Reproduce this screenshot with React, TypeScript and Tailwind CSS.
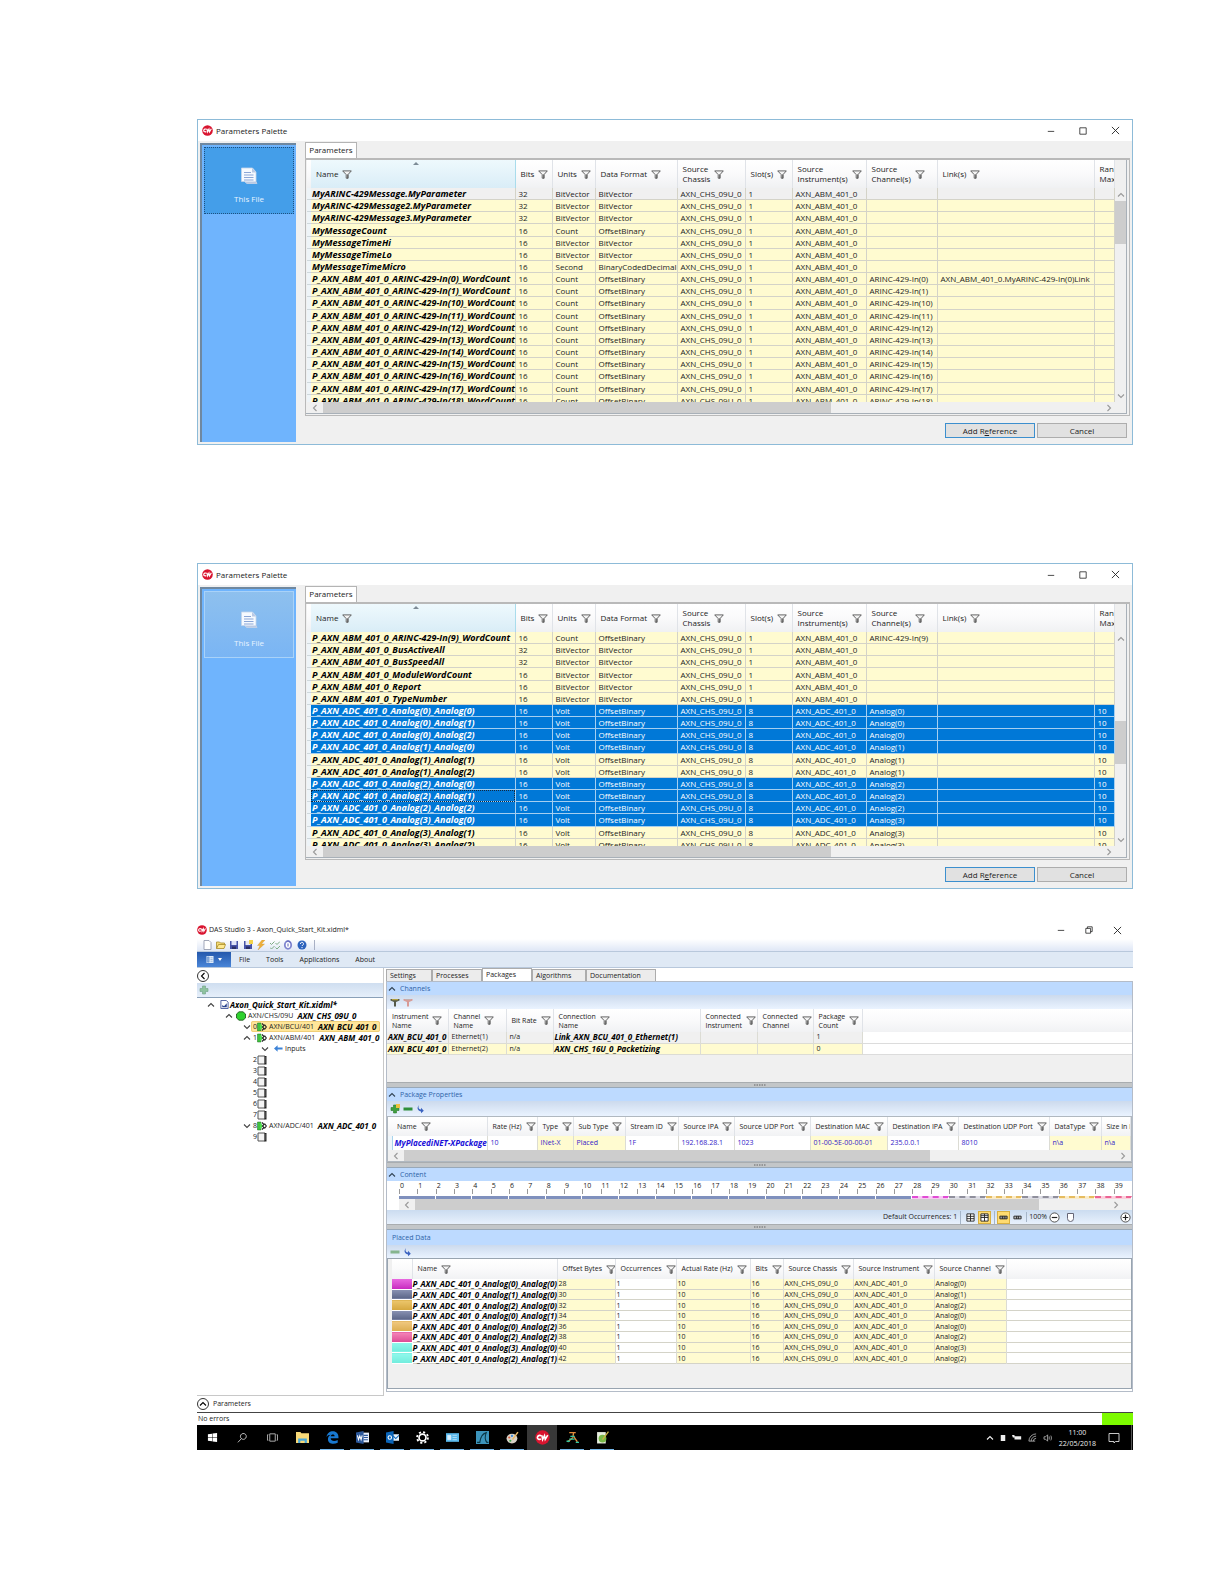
import type { ReactNode } from "react";
import { clsx } from "clsx";

type Column = { label: string; w: string; filter?: boolean; sorted?: boolean };

const paletteColumns: Column[] = [
  { label: "Name", w: "w-[204px]", sorted: true },
  { label: "Bits", w: "w-[37px]" },
  { label: "Units", w: "w-[43px]" },
  { label: "Data Format", w: "w-[82px]" },
  { label: "Source\nChassis", w: "w-[68px]" },
  { label: "Slot(s)", w: "w-[47px]" },
  { label: "Source\nInstrument(s)", w: "w-[74px]" },
  { label: "Source\nChannel(s)", w: "w-[71px]" },
  { label: "Link(s)", w: "w-[157px]" },
  { label: "Ran\nMax", w: "w-auto", filter: false },
];

type ParamRow = { cells: string[]; selected?: boolean; current?: boolean; focused?: boolean };

const abm = (name: string, bits: string, units: string, format: string, channel = "", link = ""): ParamRow => ({
  cells: [name, bits, units, format, "AXN_CHS_09U_0", "1", "AXN_ABM_401_0", channel, link, ""],
});

const adc = (a: number, b: number, selected = false, focused = false): ParamRow => ({
  cells: [
    `P_AXN_ADC_401_0_Analog(${a})_Analog(${b})`,
    "16",
    "Volt",
    "OffsetBinary",
    "AXN_CHS_09U_0",
    "8",
    "AXN_ADC_401_0",
    `Analog(${a})`,
    "",
    "10",
  ],
  selected,
  focused,
});

const wordCount = (n: number, link = "") =>
  abm(`P_AXN_ABM_401_0_ARINC-429-In(${n})_WordCount`, "16", "Count", "OffsetBinary", `ARINC-429-In(${n})`, link);

const firstRows: ParamRow[] = [
  { ...abm("MyARINC-429Message.MyParameter", "32", "BitVector", "BitVector"), current: true },
  abm("MyARINC-429Message2.MyParameter", "32", "BitVector", "BitVector"),
  abm("MyARINC-429Message3.MyParameter", "32", "BitVector", "BitVector"),
  abm("MyMessageCount", "16", "Count", "OffsetBinary"),
  abm("MyMessageTimeHi", "16", "BitVector", "BitVector"),
  abm("MyMessageTimeLo", "16", "BitVector", "BitVector"),
  abm("MyMessageTimeMicro", "16", "Second", "BinaryCodedDecimal"),
  wordCount(0, "AXN_ABM_401_0.MyARINC-429-In(0)Link"),
  wordCount(1),
  ...[10, 11, 12, 13, 14, 15, 16, 17, 18].map((n) => wordCount(n)),
];

const secondRows: ParamRow[] = [
  wordCount(9),
  abm("P_AXN_ABM_401_0_BusActiveAll", "32", "BitVector", "BitVector"),
  abm("P_AXN_ABM_401_0_BusSpeedAll", "32", "BitVector", "BitVector"),
  abm("P_AXN_ABM_401_0_ModuleWordCount", "16", "BitVector", "BitVector"),
  abm("P_AXN_ABM_401_0_Report", "16", "BitVector", "BitVector"),
  abm("P_AXN_ABM_401_0_TypeNumber", "16", "BitVector", "BitVector"),
  adc(0, 0, true),
  adc(0, 1, true),
  adc(0, 2, true),
  adc(1, 0, true),
  adc(1, 1),
  adc(1, 2),
  adc(2, 0, true),
  adc(2, 1, true, true),
  adc(2, 2, true),
  adc(3, 0, true),
  adc(3, 1),
  adc(3, 2),
];

function CwLogo({ className }: { className?: string }) {
  return (
    <svg viewBox="0 0 24 24" className={className} aria-hidden="true">
      <circle cx="12" cy="12" r="11.5" fill="#d9142f" />
      <path
        d="M10 9.500C7.500 7.800 4 9 3.800 12c-.1 2.800 3.400 4 5.700 2.200M11 8.500l1.200 6.500 3-6 1.200 6 4-6.800"
        fill="none"
        stroke="#fff"
        strokeWidth="2.600"
      />
    </svg>
  );
}

function Funnel() {
  return (
    <svg viewBox="0 0 10 9" className="h-[9px] w-[10px] shrink-0" aria-hidden="true">
      <path d="M.7.9h8.600L6 4.600v3.600H4.200V4.600z" fill="#f4f4f4" stroke="#555" strokeWidth=".9" />
      <path d="M5.300 4.400h1v4h-1z" fill="#555" />
    </svg>
  );
}

function Chevron({ dir, className }: { dir: "up" | "down" | "left" | "right"; className?: string }) {
  const d = {
    up: "M1 5.500 4 2.500l3 3",
    down: "M1 2.500l3 3 3-3",
    left: "M5.500 1l-3 3 3 3",
    right: "M2.500 1l3 3-3 3",
  }[dir];
  return (
    <svg viewBox="0 0 8 8" className={clsx("h-2 w-2 shrink-0", className)} aria-hidden="true">
      <path d={d} fill="none" stroke="currentColor" strokeWidth="1.100" />
    </svg>
  );
}

function HeadCell({ col, className }: { col: Column; className?: string }) {
  return (
    <th className={clsx("relative border-r border-[#e0e3e8] p-0 font-normal", col.w, className)}>
      {col.sorted && (
        <svg viewBox="0 0 6 3" className="absolute top-0.5 left-1/2 h-[3px] w-[6px]" aria-hidden="true">
          <path d="M0 3l3-3 3 3z" fill="#7d8b96" />
        </svg>
      )}
      <span className="flex items-center gap-1 overflow-hidden pl-[5px] text-left whitespace-pre">
        {col.label}
        {col.filter !== false && <Funnel />}
      </span>
    </th>
  );
}

function WindowControls({ restored, wide }: { restored?: boolean; wide?: boolean }) {
  const size = clsx("flex h-5 items-center justify-center text-[#222]", wide ? "w-8" : "w-7");
  return (
    <div className={clsx("ml-auto flex", wide ? "pr-px" : "pr-0.5")}>
      <button type="button" aria-label="Minimize" className={size}>
        <svg viewBox="0 0 10 10" className="h-2 w-2">
          <path d="M1 5.500h8" stroke="currentColor" />
        </svg>
      </button>
      <button type="button" aria-label="Maximize" className={size}>
        <svg viewBox="0 0 10 10" className="h-2 w-2" fill="none" stroke="currentColor">
          {restored ? <path d="M1 3h6v6H1zM3 3V1h6v6H7" /> : <path d="M1 1h8v8H1z" />}
        </svg>
      </button>
      <button type="button" aria-label="Close" className={size}>
        <svg viewBox="0 0 10 10" className="h-[9px] w-[9px]">
          <path d="M1 1l8 8M9 1L1 9" stroke="currentColor" />
        </svg>
      </button>
    </div>
  );
}

function HScroll({ thumb, inset = "pr-1" }: { thumb: string; inset?: string }) {
  return (
    <div className={clsx("flex h-[11px] items-center bg-[#f0f0f0] text-[#999]", inset)}>
      <Chevron dir="left" className="mx-1" />
      <div className={clsx("h-full bg-[#cdcdcd]", thumb)} />
      <Chevron dir="right" className="ml-auto" />
    </div>
  );
}

function FileTile({ focused }: { focused?: boolean }) {
  return (
    <button
      type="button"
      className={clsx(
        "m-[2px] flex h-[67px] flex-col items-center border pt-[19px] text-[#e6f3ff]",
        focused ? "border-dotted border-[#1d4f80] bg-[#449ee9]" : "border-[#a9d2f8] bg-linear-to-b from-[#8ec0ee] to-[#7ab5f4]"
      )}
    >
      <svg viewBox="0 0 18 18" className="h-[18px] w-[18px]" aria-hidden="true">
        <path d="M1.500 1h11l3.500 4v9.500l1 2H7l-2.500-2h-3z" fill="#f6faff" stroke="#c4d4ea" strokeWidth=".8" />
        <path d="M12 1v4.500h4M4.500 14.500 7 16.500h10l-1-2z" fill="#b9c9e4" />
        <path d="M4 5.500h7M4 8h9.500M4 10.500h9.500M4 13h9.500" stroke="#8ba6d6" />
      </svg>
      <span className="mt-2">This File</span>
    </button>
  );
}

function ParametersPalette({ rows, tileFocused, scrolled }: { rows: ParamRow[]; tileFocused?: boolean; scrolled?: boolean }) {
  return (
    <section className="border border-[#8dbbd8] bg-[#f0f0f0] text-[8px] leading-[11px] text-[#222]">
      <header className="flex h-[21px] items-center bg-white pl-1">
        <CwLogo className="h-[11px] w-[11px]" />
        <h2 className="ml-[3px]">Parameters Palette</h2>
        <WindowControls wide />
      </header>
      <div className="flex h-[303px]">
        <aside className="mt-0.5 mb-0.5 ml-0.5 flex w-[96px] shrink-0 flex-col border-t-2 border-l-2 border-[#6f88a0] bg-[#6fb4fd]">
          <FileTile focused={tileFocused} />
        </aside>
        <div className="ml-[9px] flex min-w-0 flex-1 flex-col">
          <div className="flex h-[17px] items-end">
            <button type="button" className="h-4 w-[52px] border border-b-0 border-[#b4b4b4] bg-white pb-0.5">
              Parameters
            </button>
          </div>
          <div className="mr-0.5 border border-t-2 border-[#b9b9b9] bg-[#f0f0f0] pr-0.5 pb-px">
            <div className="border-r border-b border-[#a8b0b8] pl-px">
              <div className="flex h-[242px]">
                <div className="min-w-0 flex-1 overflow-hidden bg-[#fffbd0]">
                  <table className="h-[247px] w-full table-fixed border-collapse">
                    <thead>
                      <tr className="h-[28px] bg-linear-to-b from-white via-[#fafafb] to-[#f0f1f3] leading-[10px]">
                        <th className="w-1 p-0" aria-label="Row marker" />
                        {paletteColumns.map((c) => (
                          <HeadCell
                            key={c.label}
                            col={c}
                            className={c.sorted && "border-r-[#a9dcec] bg-linear-to-b from-[#eef9fd] via-[#e4f3fa] to-[#d9edf7]"}
                          />
                        ))}
                      </tr>
                    </thead>
                    <tbody>
                      {rows.map((row) => (
                        <tr
                          key={row.cells[0]}
                          className={clsx(
                            row.selected ? "bg-[#0078d7] text-white" : row.current ? "bg-[#f0f0f0]" : "bg-[#fffbd0]"
                          )}
                        >
                          <td className="border-b border-[#cfd8dc] bg-[#eef4f8] p-0" />
                          {row.cells.map((cell, i) => (
                            <td
                              key={i}
                              className={clsx(
                                "border-r border-b p-0 whitespace-nowrap",
                                row.selected ? "border-[#a5cff0]" : "border-[#d4d3c8]",
                                i === 0 ? "pl-px text-[9px] font-bold italic" : "pl-[3px]",
                                i === 0 && !row.selected && "text-black",
                                i === 0 && row.focused && "outline-1 -outline-offset-1 outline-dotted outline-[#102840]"
                              )}
                            >
                              {cell}
                            </td>
                          ))}
                        </tr>
                      ))}
                    </tbody>
                  </table>
                </div>
                <div className="mt-[29px] flex w-[11px] flex-col items-center py-0.5 text-[#999]">
                  <Chevron dir="up" />
                  <div className={clsx("h-[43px] w-full bg-[#cdcdcd]", scrolled ? "mt-[78px]" : "mt-0.5")} />
                  <Chevron dir="down" className="mt-auto" />
                </div>
              </div>
              <HScroll thumb="w-[508px]" inset="pr-[13px]" />
            </div>
          </div>
          <div className="mt-[7px] mr-[5px] flex justify-end gap-0.5">
            <button type="button" className="h-[15px] w-[90px] border border-[#3c8fce] bg-[#e1e1e1]">
              Add R<u>e</u>ference
            </button>
            <button type="button" className="h-[15px] w-[90px] border border-[#adadad] bg-[#e1e1e1]">
              Cancel
            </button>
          </div>
        </div>
      </div>
    </section>
  );
}

const toolbarIcons: { name: string; art: ReactNode }[] = [
  { name: "New", art: <path d="M2 .5h5l2 2v7H2z" fill="#fff" stroke="#8b93a8" strokeWidth=".8" /> },
  {
    name: "Open",
    art: (
      <>
        <path d="M.5 8.500V2h3l1 1h4v2" fill="#f5dc78" stroke="#a88c28" strokeWidth=".8" />
        <path d="M.5 8.500 2.500 4.500h7L8 8.500z" fill="#ffe98f" stroke="#a88c28" strokeWidth=".8" />
      </>
    ),
  },
  {
    name: "Save",
    art: (
      <>
        <path d="M1 1h8v8H1z" fill="#4653a8" />
        <path d="M2.500 1h5v4h-5z" fill="#dfe4f8" />
        <path d="M3 6.500h4V9H3z" fill="#2a2f66" />
      </>
    ),
  },
  {
    name: "Save As",
    art: (
      <>
        <path d="M1 1h8v8H1z" fill="#4653a8" />
        <path d="M2.500 1h5v4h-5z" fill="#e9eaf0" />
        <path d="M3 6.500h4V9H3z" fill="#2a2f66" />
        <path d="M6 0h4v4H6z" fill="#f3d34a" />
      </>
    ),
  },
  { name: "Program", art: <path d="M6 0 1.500 5.500h2.500L2 10l6.500-6H5.500L9 0z" fill="#eeb03a" stroke="#c98a20" strokeWidth=".3" /> },
  {
    name: "Verify",
    art: <path d="M0 3l1.500 1.500L4.500 1.500M5.500 3 7 4.500l3-3M0 7.500 1.500 9l3-3M5.500 7.500 7 9l3-3" fill="none" stroke="#7fae86" />,
  },
  {
    name: "Attach",
    art: (
      <>
        <ellipse cx="5" cy="5" rx="3.200" ry="3.900" fill="#fff" stroke="#8086d0" strokeWidth="1.800" />
        <path d="M3.500 1.500C5 .5 7 1 7.500 3M5 3.500v3" fill="none" stroke="#5d63b8" />
      </>
    ),
  },
  {
    name: "Help",
    art: (
      <>
        <circle cx="5" cy="5" r="4.500" fill="#2d63bd" />
        <path d="M3.500 4a1.500 1.500 0 1 1 2 1.200L5 6M5 7v1.200" fill="none" stroke="#fff" />
      </>
    ),
  },
];

function Slot({ filled }: { filled?: boolean }) {
  if (!filled) {
    return (
      <svg viewBox="0 0 10 10" className="h-[10px] w-[10px]" aria-hidden="true">
        <path d="M1 1h7v8H1z" fill="#f4f4f4" stroke="#555" />
        <path d="M7.500 1h2v8.500h-2z" fill="#222" />
        <path d="M7.500 3h2M7.500 5h2M7.500 7h2" stroke="#aaa" strokeWidth=".5" />
      </svg>
    );
  }
  return (
    <svg viewBox="0 0 10 10" className="h-[10px] w-[10px]" aria-hidden="true">
      <path d="M.5 1h3.500v8H.5z" fill="#3fc43f" stroke="#1c6a1c" strokeWidth=".5" />
      <path d="M3 1.500 6 5 3 8.500z" fill="#4ddf4d" />
      <path d="M5 1.500 7 3.500 5.500 5 7 6.500 5 8.500M7.500 2.500 9.300 5 7.500 7.500" fill="none" stroke="#222" strokeWidth="1.100" />
    </svg>
  );
}

type TreeItem = { pad: string; open?: "up" | "down"; slot?: string; icon?: ReactNode; label?: string; name?: string; active?: boolean };

const treeItems: TreeItem[] = [
  {
    pad: "pl-[10px]",
    open: "up",
    icon: (
      <svg viewBox="0 0 10 10" className="mr-px ml-[3px] h-[9px] w-[9px]" aria-hidden="true">
        <path d="M1 .5h6l2 2v7H1z" fill="#fff" stroke="#3c4f96" />
        <path d="M2.500 8V5.500L4.500 7l3-3.500V8z" fill="#27408c" />
      </svg>
    ),
    name: "Axon_Quick_Start_Kit.xidml*",
  },
  {
    pad: "pl-[28px]",
    open: "up",
    icon: (
      <svg viewBox="0 0 10 10" className="ml-px h-[10px] w-[10px]" aria-hidden="true">
        <path d="M3 .8h4L9.500 3v4L7 9.200H3L.5 7V3z" fill="#2fd12f" stroke="#174d17" strokeWidth=".8" />
      </svg>
    ),
    label: "AXN/CHS/09U",
    name: "AXN_CHS_09U_0",
  },
  { pad: "pl-[46px]", open: "down", slot: "0", icon: <Slot filled />, label: "AXN/BCU/401", name: "AXN_BCU_401_0", active: true },
  { pad: "pl-[46px]", open: "up", slot: "1", icon: <Slot filled />, label: "AXN/ABM/401", name: "AXN_ABM_401_0" },
  {
    pad: "pl-[64px]",
    open: "down",
    icon: (
      <svg viewBox="0 0 10 10" className="ml-[3px] h-[9px] w-[9px]" aria-hidden="true">
        <path d="M0 5l4-3.500V4h5.500v2H4v2.500z" fill="#3d83d8" />
      </svg>
    ),
    label: "Inputs",
  },
  ...["2", "3", "4", "5", "6", "7"].map((slot) => ({ pad: "pl-[54px]", slot, icon: <Slot /> })),
  { pad: "pl-[46px]", open: "down", slot: "8", icon: <Slot filled />, label: "AXN/ADC/401", name: "AXN_ADC_401_0" },
  { pad: "pl-[54px]", slot: "9", icon: <Slot /> },
];

function SystemTree() {
  return (
    <aside className="flex w-[187px] shrink-0 flex-col border-r border-[#c8c8c8] bg-white">
      <div className="flex h-[15px] items-center">
        <button type="button" aria-label="Collapse" className="flex h-3 w-3 items-center justify-center rounded-full border border-[#333]">
          <Chevron dir="left" className="text-black" />
        </button>
      </div>
      <div className="flex h-[15px] items-center border-b border-[#8aa0b8] bg-linear-to-b from-[#cfdef0] to-[#e6effa] pl-0.5">
        <button type="button" aria-label="Add">
          <PlusArt muted />
        </button>
      </div>
      <ul className="flex-1 border-b border-[#c8c8c8] pt-px">
        {treeItems.map((item, i) => (
          <li key={i} className={clsx("flex h-[11px] items-center", item.pad)}>
            {item.open && (
              <button type="button" aria-label={item.open === "up" ? "Collapse node" : "Expand node"}>
                <Chevron dir={item.open} className="block text-[#444]" />
              </button>
            )}
            <span className={clsx("flex h-[11px] items-center pr-1 pl-0.5", item.active && "rounded-xs bg-[#ffe69a] outline-1 -outline-offset-1 outline-[#f0cf78]")}>
              {item.slot}
              {item.icon}
              {item.label && <span className="ml-0.5">{item.label}</span>}
              {item.name && <span className={clsx("text-[8px] font-bold text-black italic", item.label && "ml-1")}>{item.name}</span>}
            </span>
          </li>
        ))}
      </ul>
    </aside>
  );
}

function PlusArt({ muted }: { muted?: boolean }) {
  return (
    <svg viewBox="0 0 10 10" className="h-[10px] w-[10px]" aria-hidden="true">
      <path d="M3.500 1h3v2.500H9v3H6.500V9h-3V6.500H1v-3h2.500z" fill={muted ? "#8fc3a0" : "#3fa03f"} stroke={muted ? "#6ea184" : "#2c7a2c"} strokeWidth=".6" />
      {!muted && <path d="M6 0h4v4H6z" fill="#f0c040" />}
    </svg>
  );
}

function MinusArt({ muted }: { muted?: boolean }) {
  return (
    <svg viewBox="0 0 10 10" className="h-[10px] w-[10px]" aria-hidden="true">
      <path d="M.5 3.500h9v3h-9z" fill={muted ? "#85b58f" : "#2f8f3a"} />
    </svg>
  );
}

function ArrowArt() {
  return (
    <svg viewBox="0 0 10 10" className="h-[10px] w-[10px]" aria-hidden="true">
      <path d="M2.500 1v2c0 1.500.8 2.300 2.500 2.500V3.800l2.800 3L5 9.300V7.400C2.800 7.200 1.700 6 1.500 4z" fill="#3a62c0" />
    </svg>
  );
}

function FunnelArt({ muted }: { muted?: boolean }) {
  return (
    <svg viewBox="0 0 10 10" className="h-[10px] w-[10px]" aria-hidden="true">
      <path d="M.5 2h9v1.500L6 5v4.500H4V5L.5 3.500z" fill={muted ? "#d99a96" : "#555a4a"} />
      <path d="M2 2.700h6" stroke={muted ? "#b9b9b9" : "#e8c63c"} strokeWidth=".8" />
    </svg>
  );
}

function SectionTitle({ children, collapsible = true }: { children: string; collapsible?: boolean }) {
  return (
    <h3 className={clsx("flex items-center bg-[#bddaff] text-[#2d63a8]", collapsible ? "h-[13px]" : "h-[15px]")}>
      {collapsible ? (
        <button type="button" className="flex items-center gap-1 pl-px">
          <Chevron dir="up" className="text-[#345]" />
          {children}
        </button>
      ) : (
        <span className="pl-[5px]">{children}</span>
      )}
    </h3>
  );
}

function Tools({ items, h }: { items: [string, ReactNode][]; h: string }) {
  return (
    <div className={clsx("flex items-center gap-[3px] bg-linear-to-b from-[#ccdaed] to-[#eaf3ff] pl-[3px]", h)}>
      {items.map(([name, art]) => (
        <button key={name} type="button" aria-label={name}>
          {art}
        </button>
      ))}
    </div>
  );
}

function Splitter() {
  return (
    <div className="flex h-[6px] items-center justify-center border-y border-t-[#a9adb0] border-b-[#98a8b8] bg-[#c3c6c8] text-[#666]">
      <svg viewBox="0 0 12 2" className="h-[2px] w-3" aria-hidden="true">
        <path d="M0 1h12" stroke="currentColor" strokeDasharray="1.500 1" />
      </svg>
    </div>
  );
}

const channelColumns: Column[] = [
  { label: "Instrument\nName", w: "w-[61px]" },
  { label: "Channel\nName", w: "w-[58px]" },
  { label: "Bit Rate", w: "w-[47px]" },
  { label: "Connection\nName", w: "w-[147px]" },
  { label: "Connected\nInstrument", w: "w-[57px]" },
  { label: "Connected\nChannel", w: "w-[56px]" },
  { label: "Package\nCount", w: "w-[49px]" },
];

const channelRows = [
  ["AXN_BCU_401_0", "Ethernet(1)", "n/a", "Link_AXN_BCU_401_0_Ethernet(1)", "", "", "1"],
  ["AXN_BCU_401_0", "Ethernet(2)", "n/a", "AXN_CHS_16U_0_Packetizing", "", "", "0"],
];

const headRow = "bg-linear-to-b from-white via-[#fafafb] to-[#f1f2f4]";

function Channels() {
  return (
    <div className="h-[73px] bg-[#f0f0f0]">
      <table className="w-full table-fixed border-collapse">
        <thead>
          <tr className={clsx("h-[23px] leading-[9px]", headRow)}>
            {channelColumns.map((c) => (
              <HeadCell key={c.label} col={c} />
            ))}
            <th className="p-0" aria-label="Spare" />
          </tr>
        </thead>
        <tbody>
          {channelRows.map((row, r) => (
            <tr key={r} className="h-[11px] leading-[10px]">
              {row.map((cell, i) => (
                <td
                  key={i}
                  className={clsx(
                    "border-r border-b border-[#dcdcd4] p-0 whitespace-nowrap",
                    r === 0 ? "bg-[#f0f0f0]" : "bg-[#fffbd0]",
                    i === 0 || i === 3 ? "pl-px text-[8px] font-bold text-black italic" : "pl-[3px]"
                  )}
                >
                  {cell}
                </td>
              ))}
              <td className="border-b border-[#dcdcdc] bg-white p-0" />
            </tr>
          ))}
        </tbody>
      </table>
    </div>
  );
}

const packageColumns: (Column & { value: string; locked?: boolean })[] = [
  { label: "Name", w: "w-[95px]", value: "MyPlacediNET-XPackage" },
  { label: "Rate (Hz)", w: "w-[50px]", value: "10" },
  { label: "Type", w: "w-[36px]", value: "INet-X", locked: true },
  { label: "Sub Type", w: "w-[52px]", value: "Placed", locked: true },
  { label: "Stream ID", w: "w-[53px]", value: "1F" },
  { label: "Source IPA", w: "w-[56px]", value: "192.168.28.1" },
  { label: "Source UDP Port", w: "w-[76px]", value: "1023" },
  { label: "Destination MAC", w: "w-[77px]", value: "01-00-5E-00-00-01", locked: true },
  { label: "Destination IPA", w: "w-[71px]", value: "235.0.0.1" },
  { label: "Destination UDP Port", w: "w-[91px]", value: "8010" },
  { label: "DataType", w: "w-[52px]", value: "n\\a", locked: true },
  { label: "Size In B", w: "w-auto", value: "n\\a", locked: true, filter: false },
];

function PackageProperties() {
  return (
    <div className="border border-[#b0b8c0] bg-white">
      <table className="w-full table-fixed border-collapse">
        <thead>
          <tr className={clsx("h-[19px]", headRow)}>
            <th className="w-1 p-0" aria-label="Row marker" />
            {packageColumns.map((c) => (
              <HeadCell key={c.label} col={c} />
            ))}
          </tr>
        </thead>
        <tbody>
          <tr className="h-[14px] text-[#3322c8]">
            <td className="border-r border-[#a9d4ec] bg-[#eef6fb] p-0" />
            {packageColumns.map((c, i) => (
              <td
                key={c.label}
                className={clsx(
                  "border-r border-[#dcdcd4] p-0 whitespace-nowrap",
                  c.locked && "bg-[#fffbd0]",
                  i === 0 ? "pl-0.5 text-[8px] font-bold text-[#1a10d8] italic" : "pl-[3px]"
                )}
              >
                {c.value}
              </td>
            ))}
          </tr>
        </tbody>
      </table>
      <HScroll thumb="w-[526px]" />
    </div>
  );
}

const grey = "border-t-2 border-dashed border-t-[#8f8f9c] bg-[#dcdce4]";
const gold = "border-t-2 border-dashed border-t-[#e6bc60] bg-[#faebc8]";

const segmentColors = [
  ...Array<string>(14).fill("bg-[#7f90bd]"),
  "border-t-2 border-dashed border-t-[#e04cd4] bg-[#f8c8f4]",
  grey,
  gold,
  grey,
  gold,
  "border-t-2 border-dashed border-t-[#ec6494] bg-[#fad0dc]",
];

function Content() {
  return (
    <div>
      <div className="ml-3 h-[18px] overflow-hidden bg-white">
        <div className="flex h-[15px] pt-px text-[7px] leading-[7px] text-[#222]">
          {Array.from({ length: 40 }, (_, n) => (
            <div key={n} className="w-0 flex-1">
              <div className="pl-px">{n}</div>
              <div className="h-[5px] border-l border-[#999]" />
            </div>
          ))}
        </div>
        <div className="flex h-[3px]">
          {segmentColors.map((c, i) => (
            <div key={i} className={clsx("w-0 flex-1 border-r border-r-white", c)} />
          ))}
        </div>
      </div>
      <div className="ml-3">
        <HScroll thumb="w-[624px]" inset="pr-3" />
      </div>
      <div className="flex h-[14px] items-center justify-end bg-linear-to-b from-[#cbdcf0] to-[#e8f1fc] pr-px">
        <span className="mr-[3px]">Default Occurrences: 1</span>
        <div className="flex items-center gap-px border-l border-[#a5b5c8] pl-[3px]">
          <IconToggle label="Small grid">
            <path d="M1 1h8v8H1zM1 3.700h8M1 6.300h8M5 1v8" fill="#fff" stroke="#222" />
          </IconToggle>
          <IconToggle label="Large grid" on>
            <path d="M1 1h8v8H1zM1 5h8M1 3h8M5 1v8" fill="#fff" stroke="#222" />
          </IconToggle>
        </div>
        <div className="ml-[3px] flex items-center gap-px border-l border-[#a5b5c8] pl-0.5">
          <IconToggle label="Wide bars" on>
            <path d="M1 3.500h8v3H1zM4 3.500v3M6.500 3.500v3" fill="#999" stroke="#222" />
          </IconToggle>
          <IconToggle label="Narrow bars">
            <path d="M1 3.500h8v3H1zM4 3.500v3M6 3.500v3" fill="#bbb" stroke="#222" />
          </IconToggle>
        </div>
        <label htmlFor="zoom" className="ml-0.5 border-l border-[#a5b5c8] pl-0.5">
          100%
        </label>
        <ZoomButton label="Zoom out" d="M3 6h6" />
        <input
          id="zoom"
          type="range"
          defaultValue={14}
          className="h-[10px] w-[58px] appearance-none bg-transparent [&::-webkit-slider-thumb]:h-[9px] [&::-webkit-slider-thumb]:w-[7px] [&::-webkit-slider-thumb]:appearance-none [&::-webkit-slider-thumb]:rounded-b-full [&::-webkit-slider-thumb]:border [&::-webkit-slider-thumb]:border-[#667] [&::-webkit-slider-thumb]:bg-white"
        />
        <ZoomButton label="Zoom in" d="M3 6h6M6 3v6" />
      </div>
    </div>
  );
}

function IconToggle({ label, on, children }: { label: string; on?: boolean; children: ReactNode }) {
  return (
    <button
      type="button"
      aria-label={label}
      aria-pressed={!!on}
      className={clsx("flex h-[13px] w-[13px] items-center justify-center", on && "border border-[#d9b040] bg-[#ffdb70]")}
    >
      <svg viewBox="0 0 10 10" className="h-[9px] w-[9px] shrink-0">
        {children}
      </svg>
    </button>
  );
}

function ZoomButton({ label, d }: { label: string; d: string }) {
  return (
    <button type="button" aria-label={label} className="ml-0.5">
      <svg viewBox="0 0 12 12" className="block h-[11px] w-[11px]">
        <circle cx="6" cy="6" r="5" fill="#fff" stroke="#444" />
        <path d={d} stroke="#222" strokeWidth="1.300" />
      </svg>
    </button>
  );
}

const placedColumns: Column[] = [
  { label: "Name", w: "w-[145px]" },
  { label: "Offset Bytes", w: "w-[58px]" },
  { label: "Occurrences", w: "w-[61px]" },
  { label: "Actual Rate (Hz)", w: "w-[74px]" },
  { label: "Bits", w: "w-[33px]" },
  { label: "Source Chassis", w: "w-[70px]" },
  { label: "Source Instrument", w: "w-[81px]" },
  { label: "Source Channel", w: "w-[72px]" },
];

const placedRows: [string, number, number][] = [
  ["from-[#e868e0] to-[#c828c0]", 0, 0],
  ["from-[#8a93b4] to-[#5c6688]", 1, 0],
  ["from-[#ecc66c] to-[#d4a63c]", 2, 0],
  ["from-[#8a93b4] to-[#5c6688]", 0, 1],
  ["from-[#f0c880] to-[#dcac4c]", 0, 2],
  ["from-[#f484b8] to-[#dc4894]", 2, 2],
  ["from-[#90f8ec] to-[#70ecdc]", 3, 0],
  ["from-[#90f8ec] to-[#70ecdc]", 2, 1],
];

function PlacedData() {
  return (
    <div className="h-[131px] border border-[#98a4b0] bg-[#f0f0f0] pl-1">
      <table className="h-[105px] w-full table-fixed border-collapse">
        <thead>
          <tr className={clsx("h-[20px]", headRow)}>
            <th className="w-[20px] border-r border-[#e0e3e8] p-0" aria-label="Colour" />
            {placedColumns.map((c) => (
              <HeadCell key={c.label} col={c} />
            ))}
            <th className="p-0" aria-label="Spare" />
          </tr>
        </thead>
        <tbody className="leading-[9px]">
          {placedRows.map(([swatch, a, b], r) => (
            <tr key={r} className="border-b border-[#d4d3c8]">
              <td className={clsx("border-r border-b border-white bg-linear-to-b p-0", swatch)} />
              {[
                `P_AXN_ADC_401_0_Analog(${a})_Analog(${b})`,
                String(28 + r * 2),
                "1",
                "10",
                "16",
                "AXN_CHS_09U_0",
                "AXN_ADC_401_0",
                `Analog(${a})`,
              ].map((cell, i) => (
                <td
                  key={i}
                  className={clsx(
                    "border-r border-[#dcdcd4] p-0 whitespace-nowrap",
                    i === 0 || i === 2 ? "bg-white" : "bg-[#fffbd0]",
                    i === 0 ? "text-[8px] font-bold text-black italic" : "pl-px"
                  )}
                >
                  {cell}
                </td>
              ))}
              <td className="bg-white p-0" />
            </tr>
          ))}
        </tbody>
      </table>
    </div>
  );
}

const tabs = [
  { label: "Settings", w: "w-[46px]" },
  { label: "Processes", w: "w-[50px]" },
  { label: "Packages", w: "w-[50px]", active: true },
  { label: "Algorithms", w: "w-[54px]" },
  { label: "Documentation", w: "w-[70px]" },
];

const taskbarIcons: { name: string; running?: boolean; active?: boolean; art: ReactNode }[] = [
  { name: "Start", art: <path d="M1 2.500 5.500 1.800v3.900H1zM6 1.700 11 1v4.700H6zM1 6.300h4.500v3.900L1 9.500zM6 6.300h5V11L6 10.300z" fill="#fff" /> },
  {
    name: "Search",
    art: <path d="M4.800 7.200A3.200 3.200 0 1 1 7.200 8 3 3 0 0 1 4.800 7.200zL1 11.300" fill="none" stroke="#ddd" strokeWidth=".9" />,
  },
  {
    name: "Task View",
    art: <path d="M3 2h6v8H3zM1.500 3H.5v6h1M10.500 3h1v6h-1" fill="none" stroke="#ccc" strokeWidth=".9" />,
  },
  {
    name: "File Explorer",
    art: (
      <>
        <path d="M0 1h4l1 1h7v9H0z" fill="#f8d978" />
        <path d="M2 11V7h8v4H8V9H4v2z" fill="#4aa8d8" />
      </>
    ),
  },
  {
    name: "Edge",
    running: true,
    art: <path d="M.5 5.500C1 2 3.500.3 6.300.3c3.300 0 5.200 2.300 5.200 5.300v1.200H4.300c.2 2.600 3.700 3 6.500 1.500v2.500C6.500 13 1.800 11.500 1.800 7.500c0-1.700 1-3.200 2.500-4C2.500 3.500 1.300 4.300.5 5.500zM4.300 4.800H8C8 2.500 4.700 2.700 4.300 4.800z" fill="#1878d0" fillRule="evenodd" />,
  },
  {
    name: "Word",
    running: true,
    art: (
      <>
        <path d="M5 1.500h7v9H5z" fill="#e8eefa" />
        <path d="M7 4h4M7 6h4M7 8h4" stroke="#2b579a" />
        <path d="M0 1.300 7 0v12L0 10.700z" fill="#2b579a" />
        <path d="M1.300 4l1 4 1.200-3.500L4.700 8l1-4" fill="none" stroke="#fff" />
      </>
    ),
  },
  {
    name: "Outlook",
    running: true,
    art: (
      <>
        <path d="M6 3h6v6H6z" fill="#e6f1fb" />
        <path d="M6.500 4.500 9 7l3-3" fill="none" stroke="#0a64b8" />
        <path d="M0 1.300 7 0v12L0 10.700z" fill="#0a64b8" />
        <circle cx="3.500" cy="6" r="1.600" fill="none" stroke="#fff" />
      </>
    ),
  },
  {
    name: "Settings",
    running: true,
    art: (
      <>
        <circle cx="6" cy="6" r="3.200" fill="none" stroke="#fff" strokeWidth="1.600" />
        <circle cx="6" cy="6" r="5" fill="none" stroke="#fff" strokeWidth="1.700" strokeDasharray="1.960 1.960" />
      </>
    ),
  },
  {
    name: "Control Panel",
    running: true,
    art: (
      <>
        <path d="M0 2h12v8H0z" fill="#58b8ec" />
        <path d="M1.500 4h3v4h-3zM6 4h4M6 6h4M6 8h4" fill="#d8f0ff" stroke="#d8f0ff" strokeWidth=".6" />
      </>
    ),
  },
  {
    name: "Wireshark",
    running: true,
    art: (
      <>
        <path d="M0 0h12v12H0z" fill="#3c94bc" />
        <path d="M1 10.500h2.500C4 6 6 2.500 9.500 1.500 8 5 8.500 8.500 10 10.500h1.500" fill="none" stroke="#0a3848" />
      </>
    ),
  },
  {
    name: "Paint",
    running: true,
    art: (
      <>
        <ellipse cx="5.500" cy="7" rx="5" ry="4.500" fill="#d8d2c8" />
        <circle cx="3" cy="6" r="1" fill="#d85a3a" />
        <circle cx="5.500" cy="4.500" r="1" fill="#3a8ad8" />
        <circle cx="4" cy="9" r="1" fill="#3aa84a" />
        <path d="M6 8l5-7" stroke="#e8b868" strokeWidth="1.400" />
      </>
    ),
  },
  { name: "DAS Studio", active: true, art: null },
  {
    name: "Network Tool",
    running: true,
    art: (
      <>
        <path d="M3 1.500h6M7 1.500 6.500 5M6.500 6 1.500 10M7 5l3.500 5" fill="none" stroke="#e08a3a" strokeWidth="1.300" />
        <path d="M4 5h4M.5 9.500h3M3 7.500h5M9 10.500h3" stroke="#30c8a0" strokeWidth="1.300" />
      </>
    ),
  },
  {
    name: "Notepad++",
    running: true,
    art: (
      <>
        <path d="M1 1h8v10.500H1z" fill="#e8eee0" />
        <circle cx="6" cy="7" r="3.600" fill="#78b848" />
        <path d="M6 8l5.500-7.500" stroke="#c8b040" strokeWidth="1.200" />
      </>
    ),
  },
];

function Taskbar() {
  return (
    <footer className="flex h-[25px] bg-black leading-[11px] text-[#eee]">
      {taskbarIcons.map((t) => (
        <button
          key={t.name}
          type="button"
          aria-label={t.name}
          className={clsx("relative flex w-[30px] items-center justify-center", t.active && "bg-[#383838]")}
        >
          {t.active ? (
            <CwLogo className="h-[15px] w-[15px]" />
          ) : (
            <svg viewBox="0 0 12 12" className={t.running || t.name === "File Explorer" ? "h-[13px] w-[13px]" : "h-[11px] w-[11px]"}>
              {t.art}
            </svg>
          )}
          {t.running && <span className="absolute inset-x-[3px] bottom-0 h-px bg-[#76b9ed]" />}
        </button>
      ))}
      <div className="ml-auto flex items-center gap-[6px]">
        <Chevron dir="up" />
        <svg viewBox="0 0 8 10" className="h-2 w-[6px]" aria-hidden="true">
          <path d="M1 1h6v8H1z" fill="#eee" />
        </svg>
        <svg viewBox="0 0 12 8" className="h-[7px] w-[10px]" aria-hidden="true">
          <path d="M3 2.500h8v4H3zM0 1h3v3H1z" fill="#eee" />
        </svg>
        <svg viewBox="0 0 10 10" className="h-[9px] w-[9px]" aria-hidden="true">
          <path d="M1 9a8 8 0 0 1 8-8M3.500 9A5.500 5.500 0 0 1 9 3.500M6 9a3 3 0 0 1 3-3M1 9h7" fill="none" stroke="#bbb" strokeWidth=".9" />
        </svg>
        <svg viewBox="0 0 12 10" className="h-2 w-[10px]" aria-hidden="true">
          <path d="M1 3.500h2L5.500 1v8L3 6.500H1zM7.500 3v4M9.500 2c1 2 1 4 0 6" fill="none" stroke="#ccc" strokeWidth=".9" />
        </svg>
        <time className="text-center">
          11:00
          <br />
          22/05/2018
        </time>
      </div>
      <button type="button" aria-label="Notifications" className="flex w-[35px] items-center justify-center">
        <svg viewBox="0 0 12 12" className="h-3 w-3">
          <path d="M1 1.500h10v8H7.500L6 11V9.500H1z" fill="none" stroke="#ddd" strokeWidth=".9" />
        </svg>
      </button>
      <div className="mr-px border-r border-[#555]" />
    </footer>
  );
}

function DasStudio() {
  return (
    <section className="text-[7px] leading-[10px] text-[#222]">
      <header className="flex h-[18px] items-center bg-white">
        <CwLogo className="h-[10px] w-[10px]" />
        <h1 className="ml-0.5">DAS Studio 3 - Axon_Quick_Start_Kit.xidml*</h1>
        <WindowControls restored />
      </header>
      <div className="flex h-[12px] items-center bg-linear-to-b from-white to-[#dfe7f6] pl-[5px]">
        <div className="flex w-[113px] border-r border-[#a8b0c4] pr-1">
          {toolbarIcons.map((t) => (
            <button key={t.name} type="button" aria-label={t.name} className="flex flex-1 justify-start">
              <svg viewBox="0 0 10 10" className="h-[10px] w-[10px]">
                {t.art}
              </svg>
            </button>
          ))}
        </div>
      </div>
      <nav className="flex h-[17px] items-center gap-4 border-y border-[#b8c8dc] bg-[#dfe9f5]">
        <button type="button" aria-label="Application menu" className="-mr-2 flex h-full w-[34px] items-center justify-center gap-1 bg-linear-to-b from-[#2458ac] to-[#4a86d8] text-white">
          <svg viewBox="0 0 8 8" className="h-[7px] w-2">
            <path d="M0 0h8v8H0z" fill="#e0ecfa" />
            <path d="M4.500 2h2.500M4.500 4h2.500M4.500 6h2.500M1 1h2v6H1z" fill="#8cb0e0" stroke="#4878b8" strokeWidth=".5" />
          </svg>
          <svg viewBox="0 0 4 3" className="h-[3px] w-1">
            <path d="M0 0h4L2 3z" fill="currentColor" />
          </svg>
        </button>
        {["File", "Tools", "Applications", "About"].map((m) => (
          <button key={m} type="button">
            {m}
          </button>
        ))}
      </nav>
      <div className="flex">
        <SystemTree />
        <main className="min-w-0 flex-1 pb-1 pl-0.5">
          <div className="flex h-[13px] items-end" role="tablist">
            {tabs.map((t) => (
              <button
                key={t.label}
                type="button"
                role="tab"
                aria-selected={!!t.active}
                className={clsx(
                  "border border-b-0 border-[#acacac] pl-[3px] text-left",
                  t.w,
                  t.active ? "h-[13px] bg-white" : "h-[12px] bg-[#ececec]"
                )}
              >
                {t.label}
              </button>
            ))}
          </div>
          <div className="border border-[#b4bcc8] bg-white pb-0.5">
            <SectionTitle>Channels</SectionTitle>
            <Tools h="h-[14px]" items={[["Filter", <FunnelArt />], ["Clear filter", <FunnelArt muted />]]} />
            <Channels />
            <Splitter />
            <SectionTitle>Package Properties</SectionTitle>
            <Tools h="h-[15px]" items={[["Add package", <PlusArt />], ["Remove package", <MinusArt />], ["Move package", <ArrowArt />]]} />
            <PackageProperties />
            <Splitter />
            <SectionTitle>Content</SectionTitle>
            <Content />
            <Splitter />
            <SectionTitle collapsible={false}>Placed Data</SectionTitle>
            <Tools h="h-[13px]" items={[["Remove data", <MinusArt muted />], ["Move data", <ArrowArt />]]} />
            <PlacedData />
          </div>
        </main>
      </div>
      <div className="flex h-[17px] items-center border-b border-[#444] bg-white">
        <button type="button" className="flex items-center gap-1">
          <span className="flex h-3 w-3 items-center justify-center rounded-full border border-[#333]">
            <Chevron dir="up" className="text-black" />
          </span>
          Parameters
        </button>
      </div>
      <div className="flex h-3 items-center justify-between bg-white pl-px" role="status">
        No errors
        <span className="h-full w-[31px] bg-[#7dfb00]" />
      </div>
      <Taskbar />
    </section>
  );
}

export default function App() {
  return (
    <div className="min-h-screen bg-white pt-[119px] pr-[91px] pb-[134px] pl-[197px] font-['Open_Sans',sans-serif]">
      <ParametersPalette rows={firstRows} tileFocused />
      <div className="mt-[118px]">
        <ParametersPalette rows={secondRows} scrolled />
      </div>
      <div className="mt-[32px]">
        <DasStudio />
      </div>
    </div>
  );
}
